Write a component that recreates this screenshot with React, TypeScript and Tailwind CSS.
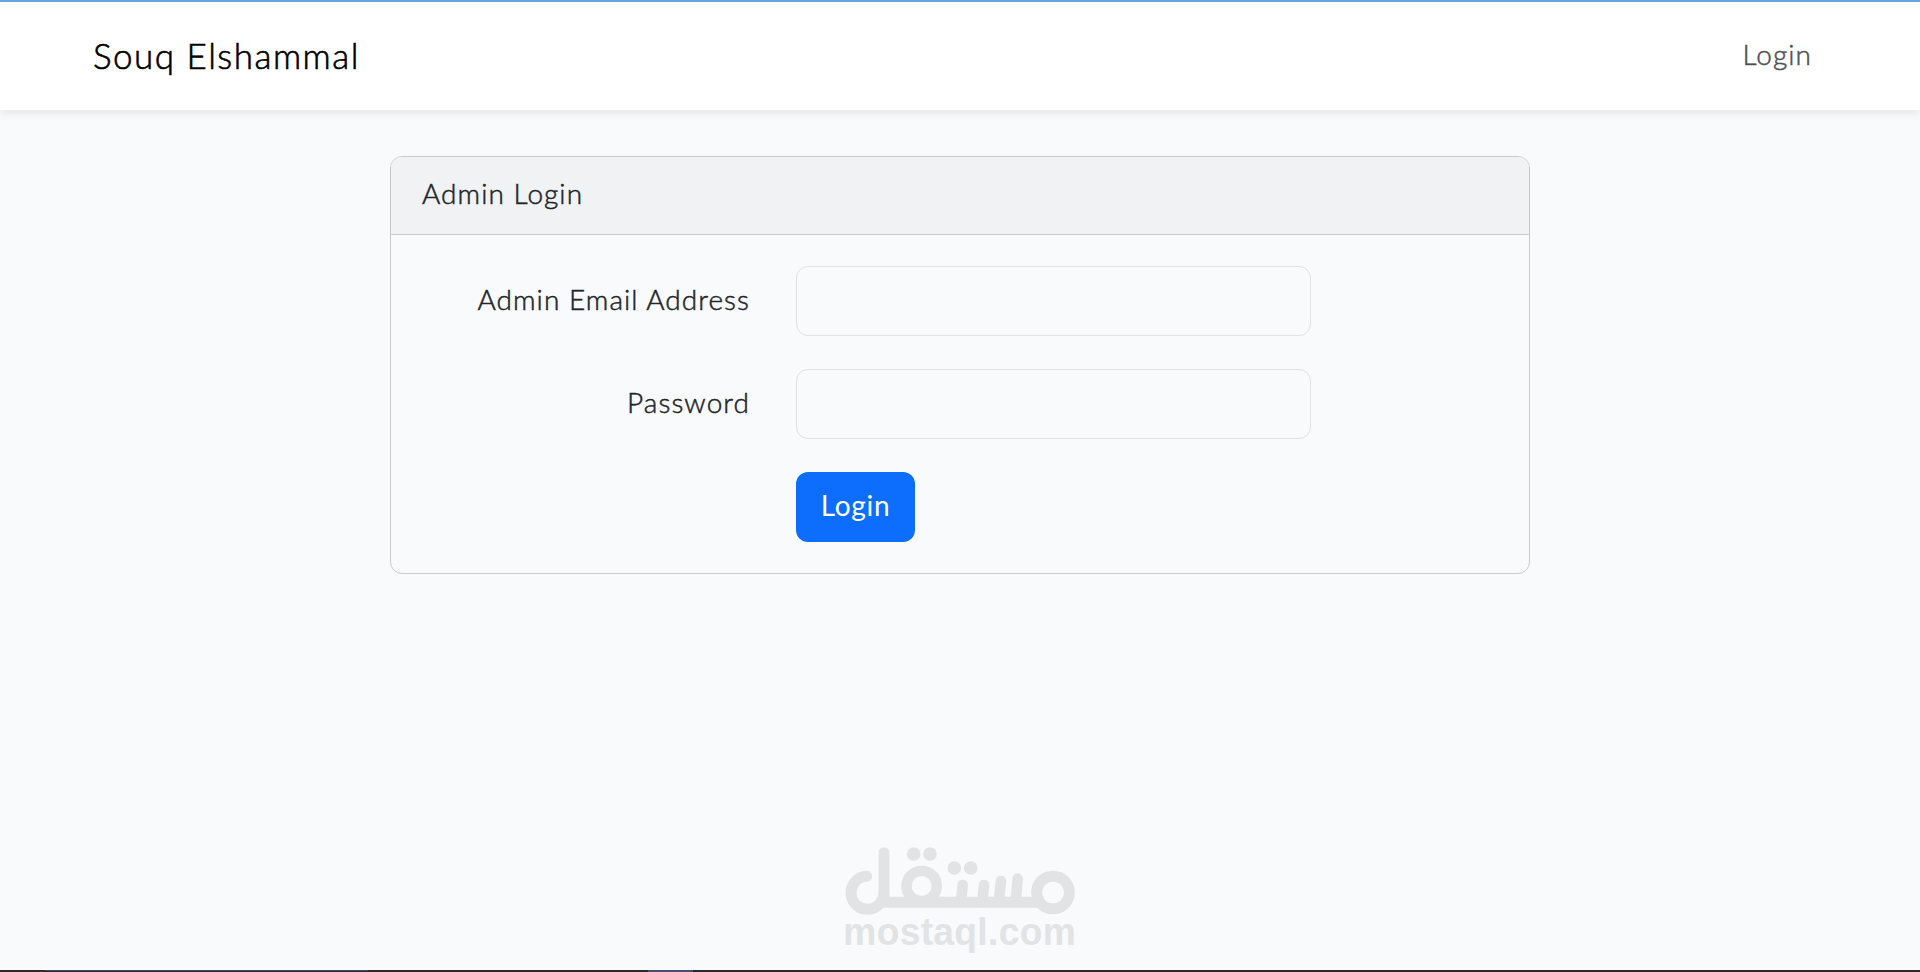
import { useState } from 'react';

const FIELDS = [
  { id: 'email', label: 'Admin Email Address', type: 'email' },
  { id: 'password', label: 'Password', type: 'password' },
];

// Word mark: strokes and dots on a 3x grid
function MostaqlLogo() {
  return (
    <svg width="260" height="137" viewBox="0 0 780 411" className="text-[#e2e3e5]" fill="none" stroke="currentColor" strokeLinecap="round">
      <path d="M110 124A49.5 49.5 0 1 0 162 172V53" strokeWidth="33" />
      <path d="M140 202H640" strokeWidth="33" strokeLinecap="butt" />
      <circle cx="275" cy="153" r="45.5" strokeWidth="31" />
      <circle cx="669" cy="172.5" r="49" strokeWidth="33" />
      <path d="M398 150L393 200M462 150L457 200M513 138L506 200M563 131L557 200" strokeWidth="32" />
      <g fill="currentColor" stroke="none">
        <circle cx="251" cy="57" r="20.5" />
        <circle cx="300" cy="57" r="20.5" />
        <circle cx="373" cy="99" r="20.5" />
        <circle cx="422" cy="99" r="20.5" />
        <text x="40" y="330" textLength="698" lengthAdjust="spacingAndGlyphs" className="font-['Liberation_Sans',sans-serif] text-[114px] font-bold">
          mostaql.com
        </text>
      </g>
    </svg>
  );
}

export default function App() {
  const [values, setValues] = useState<Record<string, string>>({ email: '', password: '' });

  return (
    <div className="flex h-screen flex-col overflow-hidden bg-[#f8fafc] font-['Lato',sans-serif] text-[28px] leading-[46px] font-light tracking-[1.05px] text-[#212529]">
      <div className="h-0.5 shrink-0 bg-[#6ba7dd]" />

      {/* Navbar */}
      <nav className="flex h-[108px] shrink-0 items-center justify-between bg-white pr-[108px] pb-0.5 pl-[93px] shadow-[0_4px_8px_rgba(0,0,0,0.075)]">
        <a href="#" className="text-[35px] tracking-[1.5px] text-black [-webkit-text-stroke:0.6px]">Souq Elshammal</a>
        <a href="#" className="pb-0.5 text-[#4d5154] [-webkit-text-stroke:0.5px]">Login</a>
      </nav>

      <main className="mt-[46px] flex justify-center">
        <div className="w-[1140px] overflow-hidden rounded-xl border border-[#c8cacc]">
          <div className="h-[78px] border-b border-[#c8cacc] bg-[#f1f2f4] px-[31px] py-[13px] [-webkit-text-stroke:0.5px]">Admin Login</div>

          <form className="flex flex-col gap-[33px] py-[31px]" onSubmit={(e) => e.preventDefault()}>
            {FIELDS.map((f) => (
              <div key={f.id} className="flex h-[70px]">
                <label htmlFor={f.id} className="w-[405px] pt-2.5 pr-[46px] text-right [-webkit-text-stroke:0.5px]">
                  {f.label}
                </label>
                <input
                  id={f.id}
                  type={f.type}
                  value={values[f.id]}
                  onChange={(e) => setValues({ ...values, [f.id]: e.target.value })}
                  className="w-[515px] rounded-xl border border-[#dee2e6] bg-[#f8fafc] px-6"
                />
              </div>
            ))}
            <button type="submit" className="ml-[405px] h-[70px] w-[119px] rounded-xl bg-[#0d6efd] pb-1 font-normal tracking-[0.7px] text-white">
              Login
            </button>
          </form>
        </div>
      </main>

      <footer className="mt-auto flex flex-col">
        <div className="-mb-0.5 flex justify-center">
          <MostaqlLogo />
        </div>
        {/* Bottom strip */}
        <div className="z-10 flex h-0.5 bg-[#2b2a2c]">
          <div className="ml-[45px] h-px w-[323px] bg-[#45456a]" />
          <div className="ml-[280px] w-[45px] bg-[#4b4b70]" />
        </div>
      </footer>
    </div>
  );
}
